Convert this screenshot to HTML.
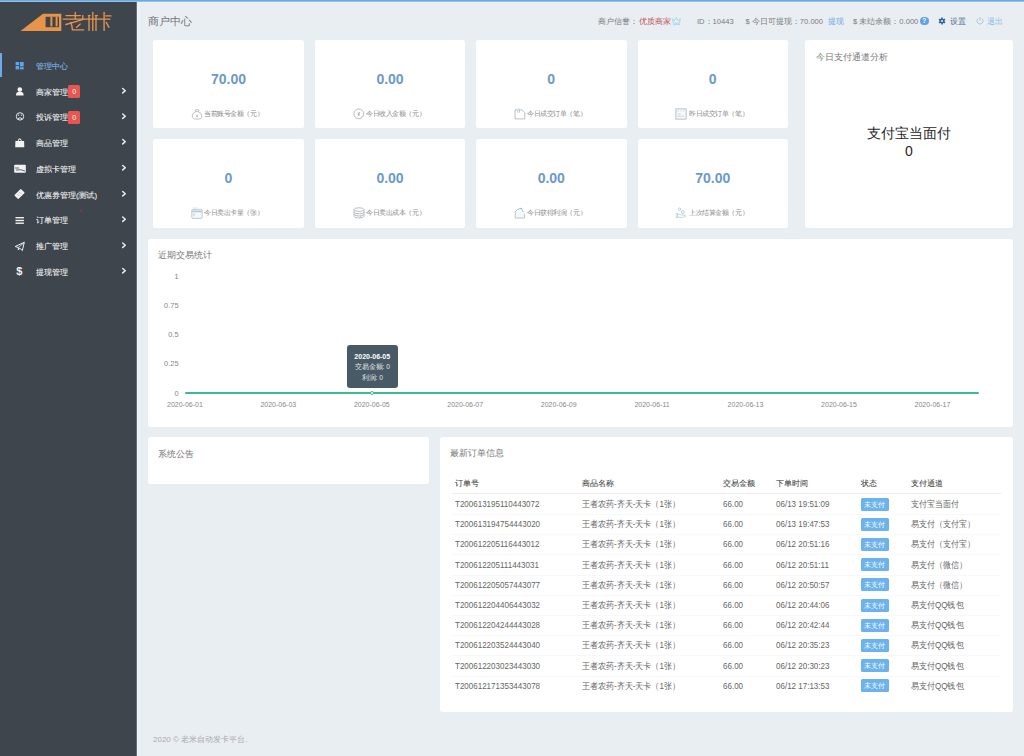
<!DOCTYPE html>
<html><head><meta charset="utf-8">
<style>
*{box-sizing:border-box;margin:0;padding:0}
html,body{width:1024px;height:756px;overflow:hidden;background:#e9eef3;font-family:"Liberation Sans",sans-serif;position:relative}
.abs{position:absolute}
#topline{left:0;top:0;width:1024px;height:3px;background:linear-gradient(#70a9de 0,#70a9de 1px,#90c2ee 1px,#90c2ee 2px,#e6f3fb 2px,#e6f3fb 3px)}
#side{left:0;top:2px;width:136px;height:754px;background:#3e454d}
#sstrip{left:137px;top:2px;width:3px;height:754px;background:#edf2f8}
#sedge{left:136px;top:2px;width:1px;height:754px;background:#687079}
.card{position:absolute;background:#fff;border-radius:2.5px}
.num{position:absolute;left:0;right:0;text-align:center;font-weight:bold;font-size:14px;color:#6c99c9;top:31px}
.lab{position:absolute;left:51px;font-size:7px;transform:scale(0.94);transform-origin:0 50%;color:#8a8a8a;top:69.8px;white-space:nowrap;line-height:8px}
.icw{position:absolute;left:37.6px;width:12px;height:12px}
.ic{display:block}
.mt{position:absolute;left:36px;font-size:7.5px;color:#efefef;white-space:nowrap;line-height:10px;margin-top:1.3px;text-shadow:0.35px 0 0 rgba(239,239,239,0.45)}
.badge{position:absolute;left:68.4px;width:11.6px;height:13px;background:#e95550;border-radius:1.5px;color:#fff;font-size:7px;text-align:center;line-height:13px}
.hd{position:absolute;top:16.6px;font-size:7.6px;color:#7a7a7a;white-space:nowrap;line-height:10px}
.yl{position:absolute;right:834.5px;font-size:7.4px;color:#858585;line-height:10px;text-align:right;margin-top:0.8px}
.xl{position:absolute;top:161px;width:60px;text-align:center;font-size:7px;color:#888;line-height:10px}
.th{position:absolute;font-size:7.5px;color:#4a4a4a;text-shadow:0.3px 0 0 rgba(74,74,74,0.4);white-space:nowrap;line-height:10px}
.td{position:absolute;font-size:9px;transform:scale(0.89,1);transform-origin:0 50%;color:#666;white-space:nowrap;line-height:10px}
.bdg{position:absolute;width:28.5px;height:13px;background:#6cb2ee;border-radius:1.5px;color:#fff;font-size:6.5px;line-height:13px;text-align:center}
.panel{position:absolute;background:#fff;border-radius:2.5px}
.ptitle{position:absolute;font-size:9px;color:#777;white-space:nowrap}
</style></head><body>
<div id="topline" class="abs"></div>
<div id="side" class="abs"></div><div id="sstrip" class="abs"></div><div id="sedge" class="abs"></div>
<svg class="abs" style="left:0;top:0" width="136" height="40" viewBox="0 0 136 40">
 <path d="M20.5 31 L43 13.8 L61.3 13.8 L61.3 31 Z" fill="#e8934a"/>
 <rect x="45.6" y="16.8" width="13.4" height="10.4" fill="#3e454d"/>
 <g fill="#e8934a">
  <rect x="50.4" y="16.8" width="2" height="9.6"/>
  <rect x="55.6" y="16.8" width="2" height="9.6"/>
 </g>
 <g stroke="#e8944c" stroke-width="1.35" fill="none" stroke-linecap="round" stroke-linejoin="round">
  <path d="M66 15.6 H80.4"/>
  <path d="M75.3 12.4 V19.1"/>
  <path d="M63.2 19.1 H110"/>
  <path d="M82.8 15.4 V19"/>
  <path d="M83.1 19.4 Q75 22 65.9 24.5"/>
  <path d="M70.8 22.4 Q72.4 26 72.4 29.9 H83.7"/>
  <path d="M80.2 24 L76.7 27.2"/>
  <path d="M89 15.4 V30.4"/>
  <path d="M92.8 12.4 V30.4"/>
  <path d="M96 15.4 V30.4"/>
  <path d="M104.1 12.4 V30.4"/>
  <path d="M88.4 15.6 H90 M95.4 15.6 H97.4"/>
  <path d="M105.7 15.9 H111"/>
  <path d="M106.2 22.4 L108.9 27.2"/>
 </g>
</svg>
<div class="abs" style="left:0;top:53px;width:2px;height:24px;background:#6aa9ea"></div>
<div class="mt" style="top:61px;color:#5ea3e6">管理中心</div>
<div class="mt" style="top:87px">商家管理</div>
<div class="mt" style="top:112px">投诉管理</div>
<div class="mt" style="top:138px">商品管理</div>
<div class="mt" style="top:164px">虚拟卡管理</div>
<div class="mt" style="top:190px">优惠券管理(测试)</div>
<div class="mt" style="top:215px">订单管理</div>
<div class="mt" style="top:241px">推广管理</div>
<div class="mt" style="top:267px">提现管理</div>
<div class="abs" style="left:80.2px;top:210.2px;width:2.2px;height:2.2px;border-radius:50%;background:#8a3a44"></div>
<div class="badge" style="top:85px">0</div>
<div class="badge" style="top:110.5px">0</div>
<svg class="abs" style="left:0;top:0" width="136" height="290" viewBox="0 0 136 290">
 <g fill="none" stroke="#ececec" stroke-width="1.5" stroke-linecap="round" stroke-linejoin="round">
  <path d="M122.7 88.5 L125.3 90.7 L122.7 92.9"/>
  <path d="M122.7 114.0 L125.3 116.2 L122.7 118.4"/>
  <path d="M122.7 139.5 L125.3 141.7 L122.7 143.9"/>
  <path d="M122.7 165.5 L125.3 167.7 L122.7 169.9"/>
  <path d="M122.7 191.5 L125.3 193.7 L122.7 195.9"/>
  <path d="M122.7 217.0 L125.3 219.2 L122.7 221.4"/>
  <path d="M122.7 243.0 L125.3 245.2 L122.7 247.4"/>
  <path d="M122.7 268.5 L125.3 270.7 L122.7 272.9"/>
 </g>
 <!-- dashboard icon -->
 <g fill="#5ea6ea">
  <rect x="15.6" y="62" width="3.5" height="3.2"/>
  <rect x="15.6" y="66" width="3.5" height="3.4"/>
  <rect x="19.9" y="62" width="3.8" height="4.4"/>
  <rect x="19.9" y="67.2" width="3.8" height="2.2"/>
 </g>
 <!-- user -->
 <g fill="#f4f4f4">
  <circle cx="19.8" cy="89.6" r="2.3"/>
  <path d="M16 95.6 Q15.9 92.4 18.2 92 L21.4 92 Q23.7 92.4 23.6 95.6 Z"/>
 </g>
 <!-- frown -->
 <g fill="none" stroke="#eaeaea" stroke-width="1">
  <circle cx="20" cy="116.4" r="3.7"/>
  <path d="M18 118.6 Q20 117 22 118.6"/>
 </g>
 <g fill="#eaeaea"><circle cx="18.6" cy="115.2" r="0.6"/><circle cx="21.4" cy="115.2" r="0.6"/></g>
 <!-- bag -->
 <path d="M15.4 141 L17.6 141 Q18.4 138.3 19.75 138.3 Q21.1 138.3 21.9 141 L24.1 141 L24.3 147.2 L15.2 147.2 Z" fill="#f2f2f2"/>
 <path d="M18.6 141 Q19 139.6 19.75 139.6 Q20.5 139.6 20.9 141 Z" fill="#3e454d"/>
 <!-- card -->
 <rect x="14.2" y="164.8" width="11.6" height="8" rx="0.8" fill="#f2f2f2"/>
 <path d="M15 168 H19 M16 170 Q21 169 25 171" stroke="#3e454d" stroke-width="0.8" fill="none"/>
 <!-- ticket -->
 <g transform="translate(19.5 194) rotate(-45)">
  <rect x="-4.6" y="-2.8" width="9.2" height="5.6" rx="0.6" fill="#f2f2f2"/>
  <path d="M-1.6 -1.4 V1.4 M1.2 -1.4 V1.4" stroke="#7a8088" stroke-width="0.7" stroke-dasharray="0.9 0.5"/>
 </g>
 <!-- bars -->
 <g fill="#f2f2f2">
  <rect x="15.5" y="217" width="8.4" height="1.4"/>
  <rect x="15.5" y="219.8" width="8.4" height="1.4"/>
  <rect x="15.5" y="222.5" width="8.4" height="1.4"/>
 </g>
 <!-- plane -->
 <path d="M15.2 246.5 L24.3 242.3 L22.3 250.6 L19.8 248.2 L18.2 250 L18.4 247.6 Z" fill="none" stroke="#f2f2f2" stroke-width="1" stroke-linejoin="round"/>
 <path d="M18.4 247.6 L24.3 242.3" stroke="#f2f2f2" stroke-width="0.8"/>
</svg>
<div class="abs" style="left:16.3px;top:265.4px;font-size:11px;font-weight:bold;color:#f2f2f2">$</div>

<div class="abs" style="left:148px;top:13.5px;font-size:11px;color:#727272">商户中心</div>
<div class="hd" style="left:597.5px">商户信誉：</div>
<div class="hd" style="left:638.5px;color:#c24f4f">优质商家</div>
<svg class="abs" style="left:671px;top:16px" width="11" height="10" viewBox="0 0 11 10"><path d="M1.5 2.5 L3.2 5 L5.3 1.5 L7.4 5 L9.3 2.5 L8.6 7.2 H2.3 Z" fill="none" stroke="#a3d6ec" stroke-width="0.9" stroke-linejoin="round"/><path d="M2 8.6 H9" stroke="#a3d6ec" stroke-width="0.9"/></svg>
<div class="hd" style="left:697px">ID：10443</div>
<div class="hd" style="left:745.5px">$ 今日可提现：70.000</div>
<div class="hd" style="left:827.5px;color:#6ea9e0">提现</div>
<div class="hd" style="left:853px">$ 未结余额：0.000</div>
<div class="abs" style="left:920px;top:16.5px;width:8.5px;height:8.5px;border-radius:50%;background:#5ea3e6;color:#fff;font-size:6.5px;font-weight:bold;text-align:center;line-height:8.5px">?</div>
<svg class="abs" style="left:937.5px;top:17px" width="8" height="8" viewBox="0 0 8 8"><g transform="translate(4 4)"><circle r="2.5" fill="#2f67a3"/><g fill="#2f67a3"><rect x="-0.8" y="-3.5" width="1.6" height="7"/><rect x="-0.8" y="-3.5" width="1.6" height="7" transform="rotate(60)"/><rect x="-0.8" y="-3.5" width="1.6" height="7" transform="rotate(120)"/></g><circle r="1" fill="#e9eef3"/></g></svg>
<div class="hd" style="left:950px;color:#4f6a85">设置</div>
<svg class="abs" style="left:975.5px;top:15.5px" width="8" height="9" viewBox="0 0 8 9"><path d="M2.2 2.6 A3 3 0 1 0 5.8 2.6" fill="none" stroke="#a9c3dc" stroke-width="0.9"/><path d="M4 1 V4.6" stroke="#a9c3dc" stroke-width="0.9"/></svg>
<div class="hd" style="left:987px;color:#8fbbe6">退出</div>

<div class="card" style="left:153px;top:40px;width:151px;height:88px"><div class="num">70.00</div><div class="icw" style="top:68px"><svg class="ic" width="12" height="12" viewBox="0 0 12 12"><path d="M4 2.2 Q6 1 8 2.2 L7.2 3.6 Q10.8 5 10.8 8 Q10.8 11.2 6 11.2 Q1.2 11.2 1.2 8 Q1.2 5 4.8 3.6 Z" fill="none" stroke="#a7a7a7" stroke-width="0.7"/><path d="M4.5 3.6 H7.5" stroke="#a7a7a7" stroke-width="0.6"/><path d="M5 6.8 L6 8 L7 6.8 M6 8 V9.6 M5.1 8.5 H6.9" stroke="#999" stroke-width="0.5" fill="none"/></svg></div><div class="lab">当前账号金额（元）</div></div>
<div class="card" style="left:315px;top:40px;width:150px;height:88px"><div class="num">0.00</div><div class="icw" style="top:68px"><svg class="ic" width="12" height="12" viewBox="0 0 12 12"><circle cx="5.8" cy="5.8" r="4.9" fill="none" stroke="#a5aaa8" stroke-width="0.75"/><path d="M4.6 3.9 L5.8 5.4 L7 3.9 M5.8 5.4 V7.8 M4.7 5.9 H6.9 M4.7 6.9 H6.9" stroke="#999" stroke-width="0.55" fill="none"/><path d="M8.3 9.2 Q9.8 8.6 10.3 7.2" stroke="#9fd6c4" stroke-width="0.9" fill="none"/></svg></div><div class="lab">今日收入金额（元）</div></div>
<div class="card" style="left:476px;top:40px;width:150.5px;height:88px"><div class="num">0</div><div class="icw" style="top:68px"><svg class="ic" width="12" height="12" viewBox="0 0 12 12"><path d="M1 1.8 H3.2 M6 1.8 H7.8 L10.8 4.6 V10.9 H1 V1.8" fill="none" stroke="#a9adb4" stroke-width="0.8"/><path d="M3.8 4.8 V1.6 Q3.8 0.7 4.6 0.7 Q5.5 0.7 5.5 1.6 V4.6" fill="none" stroke="#9fb9c8" stroke-width="0.75"/></svg></div><div class="lab">今日成交订单（笔）</div></div>
<div class="card" style="left:637.5px;top:40px;width:150.5px;height:88px"><div class="num">0</div><div class="icw" style="top:68px"><svg class="ic" width="12" height="12" viewBox="0 0 12 12"><rect x="0.9" y="0.9" width="10.2" height="10.2" fill="#f5fafc" stroke="#a9aeb6" stroke-width="0.8"/><path d="M2.6 3 H3.6 M5.4 3 H6.4 M8.2 3 H9.2" stroke="#aaa" stroke-width="0.6"/><path d="M2.6 6 H5.6 M2.5 8.2 H9.3" stroke="#b3b3b3" stroke-width="0.55"/></svg></div><div class="lab">昨日成交订单（笔）</div></div>

<div class="card" style="left:153px;top:139px;width:151px;height:89px"><div class="num">0</div><div class="icw" style="top:68.2px"><svg class="ic" width="12" height="12" viewBox="0 0 12 12"><path d="M2.2 1 H6.2" stroke="#bdd5ea" stroke-width="0.6"/><rect x="0.8" y="2.4" width="10.4" height="9" rx="0.8" fill="#f2f8fc" stroke="#a9bccc" stroke-width="0.75"/><rect x="1.2" y="3.6" width="9.6" height="1.6" fill="#b8c6d4"/><path d="M2 7.2 H4.4 M2 8.4 H3.4" stroke="#8fb8e0" stroke-width="0.5"/></svg></div><div class="lab">今日卖出卡量（张）</div></div>
<div class="card" style="left:315px;top:139px;width:150px;height:89px"><div class="num">0.00</div><div class="icw" style="top:68.2px"><svg class="ic" width="12" height="12" viewBox="0 0 12 12"><ellipse cx="6" cy="2.6" rx="5" ry="1.8" fill="none" stroke="#a3a8ad" stroke-width="0.75"/><path d="M1 2.6 V9.2 Q1 11 6 11 Q11 11 11 9.2 V2.6 M1 5 Q1 6.8 6 6.8 Q11 6.8 11 5 M1 7.2 Q1 9 6 9 Q11 9 11 7.2" fill="none" stroke="#a3a8ad" stroke-width="0.75"/><path d="M7.5 8.4 V10.4" stroke="#9fd4c0" stroke-width="0.9"/></svg></div><div class="lab">今日卖出成本（元）</div></div>
<div class="card" style="left:476px;top:139px;width:150.5px;height:89px"><div class="num">0.00</div><div class="icw" style="top:68.2px"><svg class="ic" width="12" height="12" viewBox="0 0 12 12"><path d="M1.2 4.4 V11 H10.6 V6.4" fill="#f3f8fc" stroke="#b0b6bd" stroke-width="0.8"/><path d="M1.4 4.6 Q3 2 7.6 1.2 Q6.8 2.6 8.6 3.4 Q7.6 4.6 9.6 4.8" fill="none" stroke="#8fa9d8" stroke-width="0.9"/></svg></div><div class="lab">今日获得利润（元）</div></div>
<div class="card" style="left:637.5px;top:139px;width:150.5px;height:89px"><div class="num">70.00</div><div class="icw" style="top:68.2px"><svg class="ic" width="12" height="12" viewBox="0 0 12 12"><circle cx="4.6" cy="2.2" r="1.2" fill="none" stroke="#a5adb8" stroke-width="0.6"/><circle cx="7.8" cy="5.2" r="1.4" fill="none" stroke="#8fb0d8" stroke-width="0.7"/><path d="M0.8 6.4 H2.6 V10.8 H0.8" fill="#d9ecdf" stroke="#a9c9b4" stroke-width="0.6"/><path d="M2.6 7.6 Q5 7 6.5 8 L10.6 8.6 Q11 9.4 10.2 9.8 L6 10.4 L2.6 10" fill="none" stroke="#a9b8c8" stroke-width="0.6"/></svg></div><div class="lab">上次结算金额（元）</div></div>

<div class="panel" style="left:805px;top:40px;width:208px;height:188px">
  <div class="ptitle" style="left:11px;top:11px">今日支付通道分析</div>
  <div class="abs" style="left:0;right:0;top:83.5px;text-align:center;font-size:14px;line-height:18px;color:#262626">支付宝当面付<br>0</div>
</div>

<div class="panel" style="left:148px;top:239px;width:865px;height:188px">
  <div class="ptitle" style="left:10px;top:10px">近期交易统计</div>
  <div class="yl" style="top:32px">1</div><div class="yl" style="top:61px">0.75</div><div class="yl" style="top:90px">0.5</div><div class="yl" style="top:119.5px">0.25</div><div class="yl" style="top:149px">0</div>
  <div class="xl" style="left:6.9px">2020-06-01</div><div class="xl" style="left:100.3px">2020-06-03</div><div class="xl" style="left:193.8px">2020-06-05</div><div class="xl" style="left:287.2px">2020-06-07</div><div class="xl" style="left:380.7px">2020-06-09</div><div class="xl" style="left:474.1px">2020-06-11</div><div class="xl" style="left:567.5px">2020-06-13</div><div class="xl" style="left:661.0px">2020-06-15</div><div class="xl" style="left:754.4px">2020-06-17</div>
  <div class="abs" style="left:37px;top:153px;width:794px;height:2px;background:#3dba94;border-radius:1px"></div>
  <div class="abs" style="left:221.5px;top:151.5px;width:4.5px;height:4.5px;border-radius:50%;background:#fff;border:0.8px solid #3dba94"></div>
  <div class="abs" style="left:198.5px;top:105.7px;width:51.5px;height:43px;border-radius:3px;background:#475a66;color:#fff;text-align:center;font-size:6.6px;line-height:10.5px;padding-top:7px">
    <div style="font-weight:bold;font-size:7px">2020-06-05</div>
    <div style="color:#e8e8e8">交易金额: 0</div>
    <div style="color:#e8e8e8">利润: 0</div>
  </div>
</div>

<div class="panel" style="left:148px;top:437px;width:281px;height:47px">
  <div class="ptitle" style="left:10px;top:11px">系统公告</div>
</div>

<div class="panel" style="left:440px;top:437px;width:573px;height:275px">
  <div class="ptitle" style="left:10px;top:10px">最新订单信息</div>
<div class="th" style="left:15.0px;top:41.6px">订单号</div><div class="th" style="left:142.0px;top:41.6px">商品名称</div><div class="th" style="left:283.0px;top:41.6px">交易金额</div><div class="th" style="left:335.8px;top:41.6px">下单时间</div><div class="th" style="left:420.5px;top:41.6px">状态</div><div class="th" style="left:471.0px;top:41.6px">支付通道</div><div class="abs" style="left:11.5px;top:56px;width:549.5px;height:1px;background:#ececec"></div><div class="td" style="left:15.0px;top:62.0px">T200613195110443072</div><div class="td" style="left:142.0px;top:62.0px">王者农药-齐天-天卡（1张）</div><div class="td" style="left:283.0px;top:62.0px">66.00</div><div class="td" style="left:335.8px;top:62.0px">06/13 19:51:09</div><div class="bdg" style="left:420.5px;top:60.5px">未支付</div><div class="td" style="left:471.0px;top:62.0px">支付宝当面付</div><div class="abs" style="left:11.5px;top:77.0px;width:549.5px;height:1px;background:#f8f8f8"></div><div class="td" style="left:15.0px;top:82.2px">T200613194754443020</div><div class="td" style="left:142.0px;top:82.2px">王者农药-齐天-天卡（1张）</div><div class="td" style="left:283.0px;top:82.2px">66.00</div><div class="td" style="left:335.8px;top:82.2px">06/13 19:47:53</div><div class="bdg" style="left:420.5px;top:80.7px">未支付</div><div class="td" style="left:471.0px;top:82.2px">易支付（支付宝）</div><div class="abs" style="left:11.5px;top:97.2px;width:549.5px;height:1px;background:#f8f8f8"></div><div class="td" style="left:15.0px;top:102.4px">T200612205116443012</div><div class="td" style="left:142.0px;top:102.4px">王者农药-齐天-天卡（1张）</div><div class="td" style="left:283.0px;top:102.4px">66.00</div><div class="td" style="left:335.8px;top:102.4px">06/12 20:51:16</div><div class="bdg" style="left:420.5px;top:100.9px">未支付</div><div class="td" style="left:471.0px;top:102.4px">易支付（支付宝）</div><div class="abs" style="left:11.5px;top:117.4px;width:549.5px;height:1px;background:#f8f8f8"></div><div class="td" style="left:15.0px;top:122.6px">T200612205111443031</div><div class="td" style="left:142.0px;top:122.6px">王者农药-齐天-天卡（1张）</div><div class="td" style="left:283.0px;top:122.6px">66.00</div><div class="td" style="left:335.8px;top:122.6px">06/12 20:51:11</div><div class="bdg" style="left:420.5px;top:121.1px">未支付</div><div class="td" style="left:471.0px;top:122.6px">易支付（微信）</div><div class="abs" style="left:11.5px;top:137.6px;width:549.5px;height:1px;background:#f8f8f8"></div><div class="td" style="left:15.0px;top:142.8px">T200612205057443077</div><div class="td" style="left:142.0px;top:142.8px">王者农药-齐天-天卡（1张）</div><div class="td" style="left:283.0px;top:142.8px">66.00</div><div class="td" style="left:335.8px;top:142.8px">06/12 20:50:57</div><div class="bdg" style="left:420.5px;top:141.3px">未支付</div><div class="td" style="left:471.0px;top:142.8px">易支付（微信）</div><div class="abs" style="left:11.5px;top:157.8px;width:549.5px;height:1px;background:#f8f8f8"></div><div class="td" style="left:15.0px;top:163.0px">T200612204406443032</div><div class="td" style="left:142.0px;top:163.0px">王者农药-齐天-天卡（1张）</div><div class="td" style="left:283.0px;top:163.0px">66.00</div><div class="td" style="left:335.8px;top:163.0px">06/12 20:44:06</div><div class="bdg" style="left:420.5px;top:161.5px">未支付</div><div class="td" style="left:471.0px;top:163.0px">易支付QQ钱包</div><div class="abs" style="left:11.5px;top:178.0px;width:549.5px;height:1px;background:#f8f8f8"></div><div class="td" style="left:15.0px;top:183.2px">T200612204244443028</div><div class="td" style="left:142.0px;top:183.2px">王者农药-齐天-天卡（1张）</div><div class="td" style="left:283.0px;top:183.2px">66.00</div><div class="td" style="left:335.8px;top:183.2px">06/12 20:42:44</div><div class="bdg" style="left:420.5px;top:181.7px">未支付</div><div class="td" style="left:471.0px;top:183.2px">易支付QQ钱包</div><div class="abs" style="left:11.5px;top:198.2px;width:549.5px;height:1px;background:#f8f8f8"></div><div class="td" style="left:15.0px;top:203.4px">T200612203524443040</div><div class="td" style="left:142.0px;top:203.4px">王者农药-齐天-天卡（1张）</div><div class="td" style="left:283.0px;top:203.4px">66.00</div><div class="td" style="left:335.8px;top:203.4px">06/12 20:35:23</div><div class="bdg" style="left:420.5px;top:201.9px">未支付</div><div class="td" style="left:471.0px;top:203.4px">易支付QQ钱包</div><div class="abs" style="left:11.5px;top:218.4px;width:549.5px;height:1px;background:#f8f8f8"></div><div class="td" style="left:15.0px;top:223.6px">T200612203023443030</div><div class="td" style="left:142.0px;top:223.6px">王者农药-齐天-天卡（1张）</div><div class="td" style="left:283.0px;top:223.6px">66.00</div><div class="td" style="left:335.8px;top:223.6px">06/12 20:30:23</div><div class="bdg" style="left:420.5px;top:222.1px">未支付</div><div class="td" style="left:471.0px;top:223.6px">易支付QQ钱包</div><div class="abs" style="left:11.5px;top:238.6px;width:549.5px;height:1px;background:#f8f8f8"></div><div class="td" style="left:15.0px;top:243.8px">T200612171353443078</div><div class="td" style="left:142.0px;top:243.8px">王者农药-齐天-天卡（1张）</div><div class="td" style="left:283.0px;top:243.8px">66.00</div><div class="td" style="left:335.8px;top:243.8px">06/12 17:13:53</div><div class="bdg" style="left:420.5px;top:242.3px">未支付</div><div class="td" style="left:471.0px;top:243.8px">易支付QQ钱包</div>
</div>

<div class="abs" style="left:153px;top:734px;font-size:8px;color:#aaa">2020 © 老米自动发卡平台.</div>
</body></html>
